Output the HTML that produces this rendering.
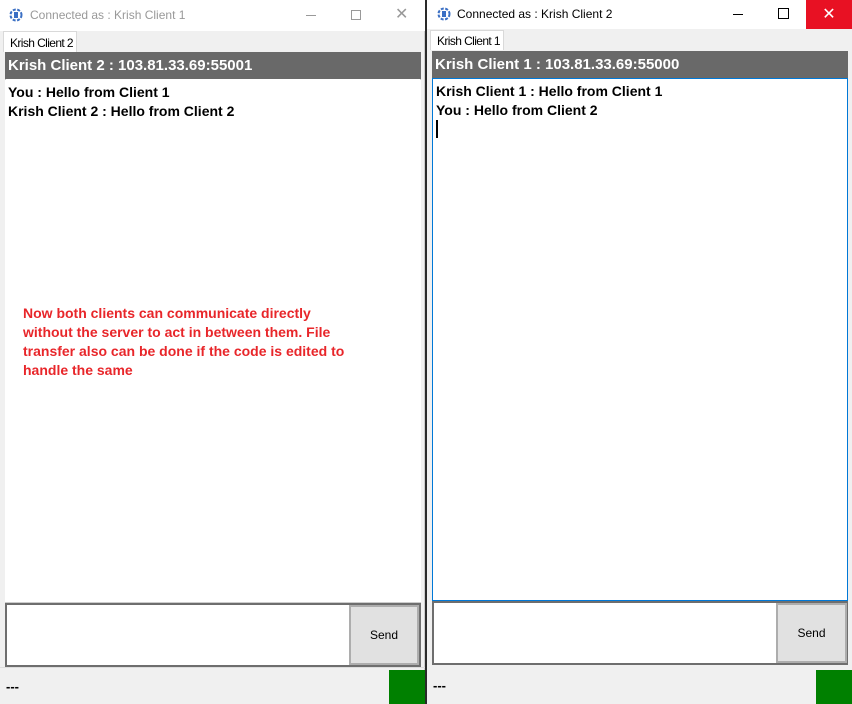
<!DOCTYPE html>
<html><head><style>
*{margin:0;padding:0;box-sizing:border-box}
body{width:852px;height:704px;background:#2a2a2a;position:relative;overflow:hidden;font-family:"Liberation Sans",sans-serif}
.a{position:absolute}
.win{background:#f0f0f0}
.title{background:#fff;font-size:12px;}
.tab{background:#fff;border:1px solid #d9d9d9;border-bottom:none;font-size:12px;letter-spacing:-0.6px;padding:4px 0 0 6px}
.hdr{background:#696969;color:#fff;font-weight:bold;font-size:15px;padding:5px 0 0 3px}
.chat{background:#fff;font-weight:bold;font-size:14px;line-height:19px;padding:3px 0 0 3px}
.btn{background:#e1e1e1;border:2px solid #adadad;font-size:12px;display:flex;align-items:center;justify-content:center}
.green{background:#008000}
</style></head><body>
<div class="a win" style="left:0;top:0;width:425px;height:704px;border-right:1px solid #ccc"></div>
<div class="a title" style="left:0;top:0;width:425px;height:31px"></div>
<svg class="a" style="left:9px;top:8px" width="14" height="14" viewBox="0 0 14 14"><circle cx="7" cy="7" r="5.5" fill="none" stroke="#3a6fc4" stroke-width="2" stroke-dasharray="3 1.5"/><rect x="5" y="4" width="4" height="6" fill="#3a6fc4"/></svg>
<div class="a" style="left:30px;top:8px;font-size:12px;color:#999">Connected as : Krish Client 1</div>
<div class="a" style="left:306px;top:15px;width:10px;height:1px;background:#999"></div>
<div class="a" style="left:351px;top:10px;width:10px;height:10px;border:1px solid #999"></div>
<div class="a" style="left:395px;top:4px;font-size:16px;color:#999">✕</div>
<div class="a tab" style="left:3px;top:31px;width:74px;height:21px">Krish Client 2</div>
<div class="a" style="left:5px;top:52px;width:416px;height:551px;border:1px solid #ccc;background:#fff"></div>
<div class="a hdr" style="left:5px;top:52px;width:416px;height:27px">Krish Client 2 : 103.81.33.69:55001</div>
<div class="a chat" style="left:5px;top:80px;width:416px;height:522px">You : Hello from Client 1<br>Krish Client 2 : Hello from Client 2</div>
<div class="a" style="left:23px;top:304px;width:336px;color:#e8262a;font-weight:bold;font-size:14px;line-height:19px">Now both clients can communicate directly<br>without the server to act in between them. File<br>transfer also can be done if the code is edited to<br>handle the same</div>
<div class="a" style="left:5px;top:603px;width:416px;height:64px;border:2px solid #6e6e6e;background:#fff"></div>
<div class="a btn" style="left:349px;top:605px;width:70px;height:60px">Send</div>
<div class="a" style="left:0;top:667px;width:425px;height:1px;background:#ddd"></div>
<div class="a" style="left:6px;top:679px;font-weight:bold;font-size:13px">---</div>
<div class="a green" style="left:389px;top:670px;width:36px;height:34px"></div>
<div class="a win" style="left:427px;top:0;width:425px;height:704px"></div>
<div class="a title" style="left:427px;top:0;width:425px;height:29px"></div>
<svg class="a" style="left:437px;top:7px" width="14" height="14" viewBox="0 0 14 14"><circle cx="7" cy="7" r="5.5" fill="none" stroke="#3a6fc4" stroke-width="2" stroke-dasharray="3 1.5"/><rect x="5" y="4" width="4" height="6" fill="#3a6fc4"/></svg>
<div class="a" style="left:457px;top:7px;font-size:12px;color:#000">Connected as : Krish Client 2</div>
<div class="a" style="left:733px;top:14px;width:10px;height:1px;background:#000"></div>
<div class="a" style="left:778px;top:8px;width:11px;height:11px;border:1px solid #000"></div>
<div class="a" style="left:806px;top:0;width:46px;height:29px;background:#e81123;color:#fff;font-size:16px;text-align:center;line-height:29px">✕</div>
<div class="a tab" style="left:430px;top:30px;width:74px;height:20px;padding-top:3px">Krish Client 1</div>
<div class="a hdr" style="left:432px;top:51px;width:416px;height:27px">Krish Client 1 : 103.81.33.69:55000</div>
<div class="a chat" style="left:432px;top:78px;width:416px;height:523px;border:1px solid #0078d7;padding:3px 0 0 3px">Krish Client 1 : Hello from Client 1<br>You : Hello from Client 2<br><span style="display:inline-block;width:2px;height:18px;background:#000"></span></div>
<div class="a" style="left:432px;top:601px;width:416px;height:64px;border:2px solid #6e6e6e;background:#fff"></div>
<div class="a btn" style="left:776px;top:603px;width:71px;height:60px">Send</div>
<div class="a" style="left:433px;top:678px;font-weight:bold;font-size:13px">---</div>
<div class="a green" style="left:816px;top:670px;width:36px;height:34px"></div>
</body></html>
